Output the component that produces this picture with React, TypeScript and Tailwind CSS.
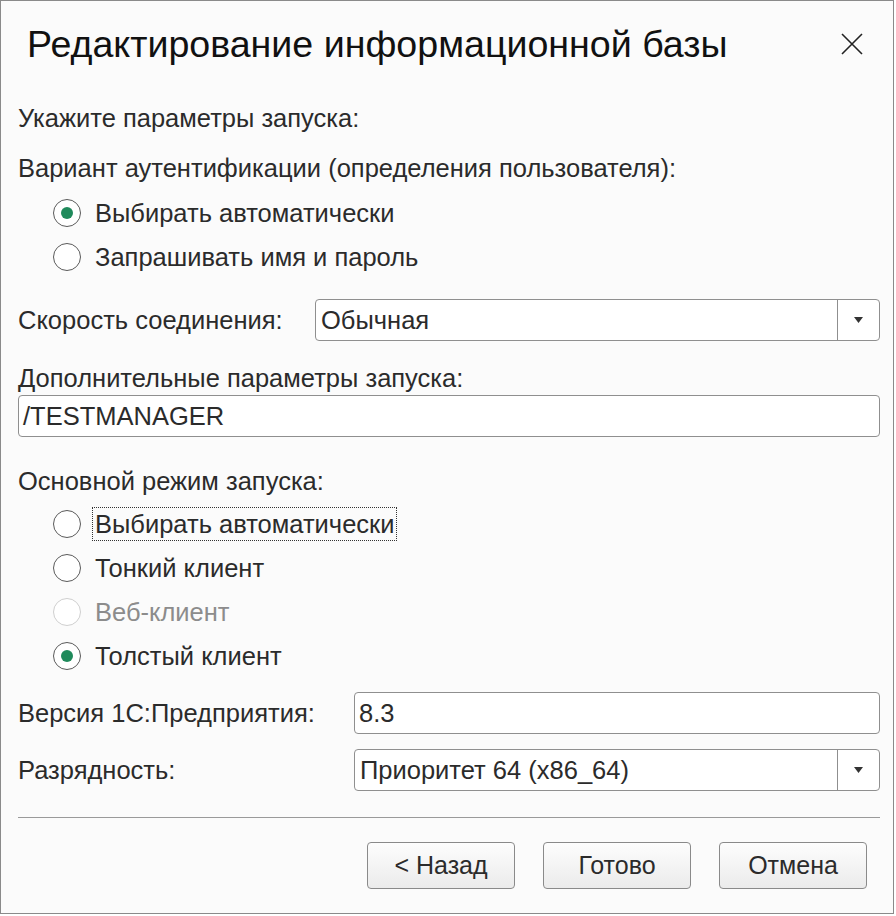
const font = { fontFamily: '"Liberation Sans", Arial, sans-serif' }

function Radio({ label, checked = false, disabled = false, focused = false }: { label: string; checked?: boolean; disabled?: boolean; focused?: boolean }) {
  return (
    <div className="flex h-[44px] items-center pl-[35px]">
      <span
        className={`flex h-[28px] w-[28px] shrink-0 items-center justify-center rounded-full border-[1.5px] bg-white ${
          disabled ? 'border-[#cfcfcf]' : 'border-[#5a5a5a]'
        }`}
      >
        {checked && <span className="h-[12px] w-[12px] rounded-full bg-[#1f8a5b]" />}
      </span>
      <span
        className={`ml-[11px] px-[2px] leading-[32px] ${
          focused ? 'border border-dotted border-[#333]' : 'border border-transparent'
        } ${disabled ? 'text-[#8c8c8c]' : 'text-[#2b2b2b]'}`}
      >
        {label}
      </span>
    </div>
  )
}

function Combo({ value }: { value: string }) {
  return (
    <div className="flex h-[42px] flex-1 items-stretch rounded-[4px] border border-[#8f8f8f] bg-white">
      <div className="flex flex-1 items-center px-[5px] text-[#2b2b2b]">{value}</div>
      <div className="flex w-[42px] items-center justify-center border-l border-[#8f8f8f]">
        <svg width="9" height="6" viewBox="0 0 9 6">
          <path d="M0 0 H9 L4.5 6 Z" fill="#333" />
        </svg>
      </div>
    </div>
  )
}

function Field({ value }: { value: string }) {
  return (
    <div className="flex h-[42px] flex-1 items-center rounded-[4px] border border-[#8f8f8f] bg-white px-[4px] text-[#2b2b2b]">
      {value}
    </div>
  )
}

function Btn({ children }: { children: string }) {
  return (
    <button className="h-[47px] w-[148px] rounded-[4px] border border-[#8a8a8a] bg-gradient-to-b from-[#fdfdfd] to-[#ebebeb] text-[25px] text-[#2b2b2b]">
      {children}
    </button>
  )
}

export default function App() {
  return (
    <div className="h-[916px] w-[896px] bg-white" style={font}>
      <div className="flex h-[914px] w-[894px] flex-col border border-[#8a8a8a] bg-[#fbfbfb] text-[25.5px] text-[#2b2b2b]">
        {/* Header */}
        <div className="flex h-[87px] shrink-0 items-center justify-between pl-[26px] pr-[30px]">
          <h1 className="text-[37.6px] leading-none text-[#111]">Редактирование информационной базы</h1>
          <svg width="22" height="22" viewBox="0 0 22 22" className="mt-[-2px]">
            <path d="M1 1 L21 21 M21 1 L1 21" stroke="#222" strokeWidth="1.6" />
          </svg>
        </div>

        <div className="flex flex-col pl-[17px] pr-[13px]">
          <div className="mt-[15px] flex h-[30px] items-center">Укажите параметры запуска:</div>
          <div className="mt-[20px] flex h-[30px] items-center">Вариант аутентификации (определения пользователя):</div>

          <div className="mt-[8px]">
            <Radio label="Выбирать автоматически" checked />
            <Radio label="Запрашивать имя и пароль" />
          </div>

          <div className="mt-[20px] flex items-center">
            <div className="w-[297px] shrink-0">Скорость соединения:</div>
            <Combo value="Обычная" />
          </div>

          <div className="mt-[22px] flex h-[30px] items-center">Дополнительные параметры запуска:</div>
          <div className="mt-[2px] flex">
            <Field value="/TESTMANAGER" />
          </div>

          <div className="mt-[29px] flex h-[30px] items-center">Основной режим запуска:</div>
          <div className="mt-[6px]">
            <Radio label="Выбирать автоматически" focused />
            <Radio label="Тонкий клиент" />
            <Radio label="Веб-клиент" disabled />
            <Radio label="Толстый клиент" checked />
          </div>

          <div className="mt-[14px] flex items-center">
            <div className="w-[336px] shrink-0">Версия 1С:Предприятия:</div>
            <Field value="8.3" />
          </div>

          <div className="mt-[15px] flex items-center">
            <div className="w-[336px] shrink-0">Разрядность:</div>
            <Combo value="Приоритет 64 (x86_64)" />
          </div>

          <div className="mt-[26px] h-px bg-[#9a9a9a]" />

          <div className="mt-[24px] flex justify-end gap-[28px] pr-[13px]">
            <Btn>{'< Назад'}</Btn>
            <Btn>Готово</Btn>
            <Btn>Отмена</Btn>
          </div>
        </div>
      </div>
    </div>
  )
}
